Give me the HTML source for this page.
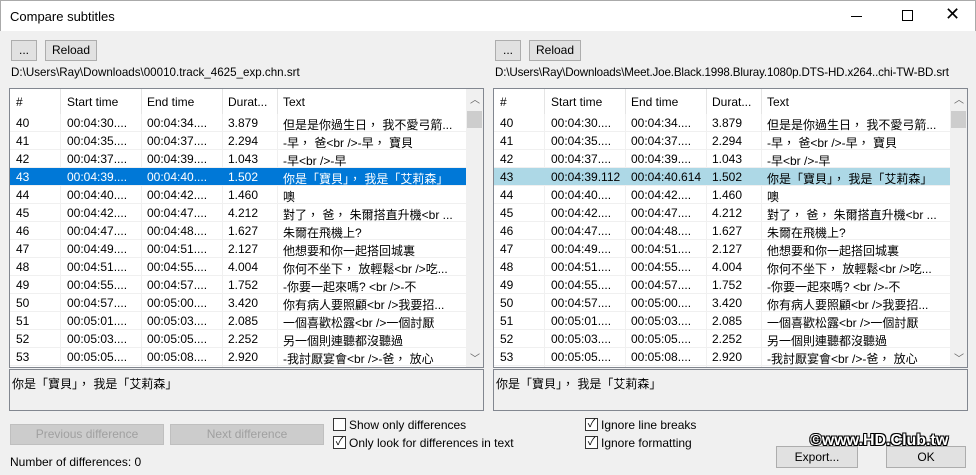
<!DOCTYPE html>
<html><head><meta charset="utf-8"><style>
*{box-sizing:border-box;margin:0;padding:0}
body{width:976px;height:475px;background:#f0f0f0;font-family:"Liberation Sans","Noto Sans CJK TC",sans-serif;font-size:12px;color:#000;position:relative;overflow:hidden}
.abs{position:absolute}
.title{left:0;top:0;width:976px;height:31px;background:#fff;border:1px solid #aaa;border-bottom:none}
.btn{position:absolute;background:#e1e1e1;border:1px solid #adadad;text-align:center;font-size:12px}
.grid{position:absolute;top:88px;width:475px;height:280px;background:#fff;border:1px solid #828790;overflow:hidden}
.row{position:absolute;left:0;height:18px;width:456px;border-bottom:1px solid #f0f0f0}
.row span{position:absolute;top:2px;white-space:nowrap;overflow:hidden}
.hdr{position:absolute;left:0;top:0;width:456px;height:25px;background:#fff}
.hdr span{position:absolute;top:6px;font-size:12px}
.hdr i{position:absolute;top:0;height:25px;border-left:1px solid #e5e5e5}
.vl{position:absolute;top:25px;bottom:0;border-left:1px solid #f0f0f0}
.sb{position:absolute;right:0;top:0;width:17px;height:100%;background:#f0f0f0}
.tb{position:absolute;top:369px;width:475px;height:42px;background:#f0f0f0;border:1px solid #828790;padding:5px 2px}
.cb{position:absolute;width:13px;height:13px;border:1px solid #333;background:#fff;font-size:11px;line-height:11px;text-align:center}
.lbl{position:absolute;font-size:12px;white-space:nowrap}
</style></head><body>
<div class="abs title"><div class="abs" style="left:9px;top:8px;font-size:13px">Compare subtitles</div>
<div class="abs" style="left:850px;top:15px;width:11px;border-top:1px solid #000"></div>
<div class="abs" style="left:901px;top:9px;width:11px;height:11px;border:1px solid #000"></div>
<div class="abs" style="left:944px;top:3px;font-size:18px">✕</div></div>

<div class="btn" style="left:11px;top:40px;width:26px;height:21px;line-height:19px">...</div>
<div class="btn" style="left:45px;top:40px;width:52px;height:21px;line-height:19px">Reload</div>
<div class="lbl" style="left:11px;top:66px;font-size:11.6px">D:\Users\Ray\Downloads\00010.track_4625_exp.chn.srt</div>
<div class="btn" style="left:495px;top:40px;width:26px;height:21px;line-height:19px">...</div>
<div class="btn" style="left:529px;top:40px;width:52px;height:21px;line-height:19px">Reload</div>
<div class="lbl" style="left:495px;top:66px;font-size:11.6px;letter-spacing:-0.15px">D:\Users\Ray\Downloads\Meet.Joe.Black.1998.Bluray.1080p.DTS-HD.x264..chi-TW-BD.srt</div>

<div id="g1" class="grid" style="left:9px"></div>
<div id="g2" class="grid" style="left:493px"></div>

<div class="tb" style="left:9px">你是「寶貝」， 我是「艾莉森」</div>
<div class="tb" style="left:493px">你是「寶貝」， 我是「艾莉森」</div>

<div class="btn" style="left:10px;top:424px;width:154px;height:21px;line-height:19px;color:#a0a0a0;background:#ccc;border-color:#bfbfbf">Previous difference</div>
<div class="btn" style="left:170px;top:424px;width:154px;height:21px;line-height:19px;color:#a0a0a0;background:#ccc;border-color:#bfbfbf">Next difference</div>
<div class="cb" style="left:333px;top:418px"></div><div class="lbl" style="left:349px;top:418px">Show only differences</div>
<div class="cb" style="left:333px;top:436px">✓</div><div class="lbl" style="left:349px;top:436px">Only look for differences in text</div>
<div class="cb" style="left:585px;top:418px">✓</div><div class="lbl" style="left:601px;top:418px">Ignore line breaks</div>
<div class="cb" style="left:585px;top:436px">✓</div><div class="lbl" style="left:601px;top:436px">Ignore formatting</div>
<div class="lbl" style="left:10px;top:455px">Number of differences: 0</div>
<div class="btn" style="left:776px;top:446px;width:82px;height:22px;line-height:20px">Export...</div>
<div class="btn" style="left:886px;top:446px;width:80px;height:22px;line-height:20px">OK</div>
<div class="lbl" style="left:810px;top:432px;font-size:16px;font-weight:bold;color:#fff;text-shadow:-1px -1px 0 #000,1px -1px 0 #000,-1px 1px 0 #000,1px 1px 0 #000">©www.HD.Club.tw</div>

<script>
const rows=[["40","00:04:30....","00:04:34....","3.879","但是是你過生日， 我不愛弓箭..."],
["41","00:04:35....","00:04:37....","2.294","-早， 爸<br />-早， 寶貝"],
["42","00:04:37....","00:04:39....","1.043","-早<br />-早"],
["43","00:04:39....","00:04:40....","1.502","你是「寶貝」， 我是「艾莉森」"],
["44","00:04:40....","00:04:42....","1.460","噢"],
["45","00:04:42....","00:04:47....","4.212","對了， 爸， 朱爾搭直升機<br ..."],
["46","00:04:47....","00:04:48....","1.627","朱爾在飛機上?"],
["47","00:04:49....","00:04:51....","2.127","他想要和你一起搭回城裏"],
["48","00:04:51....","00:04:55....","4.004","你何不坐下， 放輕鬆<br />吃..."],
["49","00:04:55....","00:04:57....","1.752","-你要一起來嗎? <br />-不"],
["50","00:04:57....","00:05:00....","3.420","你有病人要照顧<br />我要招..."],
["51","00:05:01....","00:05:03....","2.085","一個喜歡松露<br />一個討厭"],
["52","00:05:03....","00:05:05....","2.252","另一個則連聽都沒聽過"],
["53","00:05:05....","00:05:08....","2.920","-我討厭宴會<br />-爸， 放心"]];
const cols=[6,57,137,218,273];
const esc=s=>s.replace(/&/g,"&amp;").replace(/</g,"&lt;").replace(/>/g,"&gt;");
function build(id,sel,selbg,selfg,full){
 const g=document.getElementById(id);let h='<div class="hdr">';
 ["#","Start time","End time","Durat...","Text"].forEach((t,i)=>{h+=`<span style="left:${cols[i]}px">${t}</span>`});
 [50,131,212,267,456].forEach(x=>h+=`<i style="left:${x}px"></i>`);h+='</div>';
 [50,131,212,267].forEach(x=>h+=`<div class="vl" style="left:${x}px"></div>`);
 rows.forEach((r,k)=>{const s=k==3;let st=`top:${25+k*18}px;`;if(s)st+=`background:${selbg};color:${selfg};`;
  h+=`<div class="row" style="${st}">`;r.forEach((c,i)=>{let v=c;if(s&&full&&i==1)v="00:04:39.112";if(s&&full&&i==2)v="00:04:40.614";h+=`<span style="left:${cols[i]}px">${esc(v)}</span>`});h+='</div>';});
 h+='<div class="sb"><div style="position:absolute;left:4px;top:2px;font-size:10px;color:#606060">︿</div><div style="position:absolute;left:1px;top:22px;width:15px;height:17px;background:#cdcdcd"></div><div style="position:absolute;left:4px;bottom:2px;font-size:10px;color:#606060">﹀</div></div>';
 g.innerHTML=h;}
build("g1",3,"#0078d7","#fff",false);build("g2",3,"#add8e6","#000",true);
</script>
</body></html>
